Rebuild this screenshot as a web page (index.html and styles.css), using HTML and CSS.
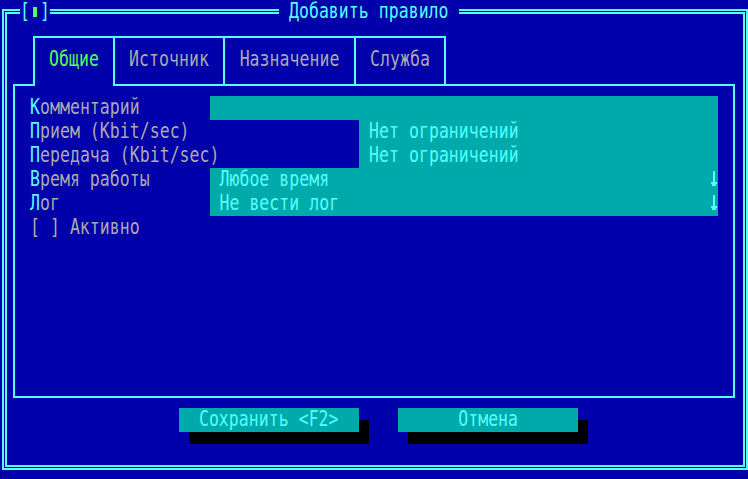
FILE: index.html
```html
<!DOCTYPE html>
<html lang="ru">
<head>
    <meta charset="UTF-8">
    <title>Добавить правило</title>
    <link rel="stylesheet" href="styles.css">
</head>
<body>
    <div class="dialog">
        <!-- Title bar over the double frame -->
        <div class="close-box">
            <span class="cell"><span class="tx">[</span></span>
            <span class="cell"><span class="close-mark"></span></span>
            <span class="cell"><span class="tx">]</span></span>
        </div>
        <div class="title"><span class="tx">Добавить правило</span></div>

        <div class="frame">
            <div class="tabs">
                <div class="tab tab-general active"><span class="tx">Общие</span></div>
                <div class="tab tab-source"><span class="tx">Источник</span></div>
                <div class="tab tab-target"><span class="tx">Назначение</span></div>
                <div class="tab tab-service"><span class="tx">Служба</span></div>
            </div>

            <div class="panel">
                <div class="row">
                    <div class="label"><span class="tx"><span class="hk">К</span>омментарий</span></div>
                    <div class="field wide"></div>
                </div>
                <div class="row">
                    <div class="label long"><span class="tx"><span class="hk">П</span>рием (Kbit/sec)</span></div>
                    <div class="field half"><span class="tx">Нет ограничений</span></div>
                </div>
                <div class="row">
                    <div class="label long"><span class="tx"><span class="hk">П</span>ередача (Kbit/sec)</span></div>
                    <div class="field half"><span class="tx">Нет ограничений</span></div>
                </div>
                <div class="row">
                    <div class="label"><span class="tx"><span class="hk">В</span>ремя работы</span></div>
                    <div class="field wide combo">
                        <span class="tx">Любое время</span>
                        <svg class="arrow" width="10" height="24" viewBox="0 0 10 24"><rect x="5" y="3" width="2" height="11"/><rect x="3" y="14" width="6" height="2"/><rect x="4" y="16" width="4" height="2"/></svg>
                    </div>
                </div>
                <div class="row">
                    <div class="label"><span class="tx"><span class="hk">Л</span>ог</span></div>
                    <div class="field wide combo">
                        <span class="tx">Не вести лог</span>
                        <svg class="arrow" width="10" height="24" viewBox="0 0 10 24"><rect x="5" y="3" width="2" height="11"/><rect x="3" y="14" width="6" height="2"/><rect x="4" y="16" width="4" height="2"/></svg>
                    </div>
                </div>
                <div class="row">
                    <div class="label"><span class="tx">[ ] Активно</span></div>
                </div>
            </div>

            <div class="buttons">
                <div class="btn"><span class="tx">Сохранить &lt;F2&gt;</span></div>
                <div class="btn"><span class="tx">Отмена</span></div>
            </div>
        </div>
    </div>
</body>
</html>
```

FILE: styles.css
```css
:root {
    --cw: 9.973px;
    --blue: #0000aa;
    --cyan: #55ffff;
    --teal: #00aaaa;
    --gray: #aaaaaa;
    --green: #55ff55;
}

body {
    margin: 0;
    width: 748px;
    height: 479px;
    overflow: hidden;
    background-color: var(--blue);
    font-family: "DejaVu Sans Mono", "Liberation Mono", monospace;
    font-size: 16.5px;
    letter-spacing: 0.04px;
    line-height: 24px;
    color: var(--gray);
}

/* text-mode glyphs are taller than the mono font */
.tx {
    display: inline-block;
    transform: scaleY(1.25);
}

/* Outer double frame */
.dialog {
    position: relative;
    box-sizing: border-box;
    height: 461px;
    margin: 9px 0 0 2px;
    border: 2px solid var(--cyan);
    padding: 1px;
}

.frame {
    box-sizing: border-box;
    height: 100%;
    border: 2px solid var(--cyan);
}

.close-box {
    position: absolute;
    top: -11px;
    left: 16px;
    display: flex;
    height: 24px;
    background-color: var(--blue);
    color: var(--cyan);
}

.close-box .cell {
    width: var(--cw);
    text-align: center;
}

.close-mark {
    display: block;
    width: 4px;
    height: 10px;
    margin: 7px auto 0;
    background-color: var(--green);
}

.title {
    position: absolute;
    top: -11px;
    left: 275px;
    height: 24px;
    padding: 0 var(--cw);
    background-color: var(--blue);
    color: var(--cyan);
}

/* Tabs */
.tabs {
    display: flex;
    margin: 22px 0 0 26px;
}

.tab {
    position: relative;
    height: 24px;
    padding: 10px 0 12px;
    border-top: 2px solid var(--cyan);
    border-right: 2px solid var(--cyan);
    text-align: center;
}

.tab-general {
    width: 78px;
    border-left: 2px solid var(--cyan);
}

.tab-source { width: 108px; }
.tab-target { width: 129px; }
.tab-service { width: 88px; }

.tab.active {
    z-index: 1;
    padding-bottom: 14px;
    margin-bottom: -2px;
    background-color: var(--blue);
    color: var(--green);
}

/* Panel */
.panel {
    box-sizing: border-box;
    height: 314px;
    margin: 0 8px 0 6px;
    padding: 10px 0 0 15px;
    border: 2px solid var(--cyan);
}

.row {
    display: flex;
    height: 24px;
}

.label {
    width: calc(var(--cw) * 18);
    white-space: nowrap;
}

.label.long {
    width: calc(var(--cw) * 33);
}

.hk {
    color: var(--cyan);
}

.field {
    box-sizing: border-box;
    height: 24px;
    padding-left: var(--cw);
    background-color: var(--teal);
    color: var(--cyan);
    white-space: nowrap;
}

.field.wide {
    width: calc(var(--cw) * 51);
}

.field.half {
    width: calc(var(--cw) * 36);
}

.field.combo {
    display: flex;
    justify-content: space-between;
}

.arrow {
    display: block;
    fill: var(--cyan);
}

/* Buttons */
.buttons {
    display: flex;
    gap: calc(var(--cw) * 4);
    margin-top: 10px;
    padding-left: 172px;
}

.btn {
    width: calc(var(--cw) * 18);
    height: 24px;
    text-align: center;
    white-space: nowrap;
    background-color: var(--teal);
    color: var(--cyan);
    box-shadow: 10px 12px 0 #000;
}
```
